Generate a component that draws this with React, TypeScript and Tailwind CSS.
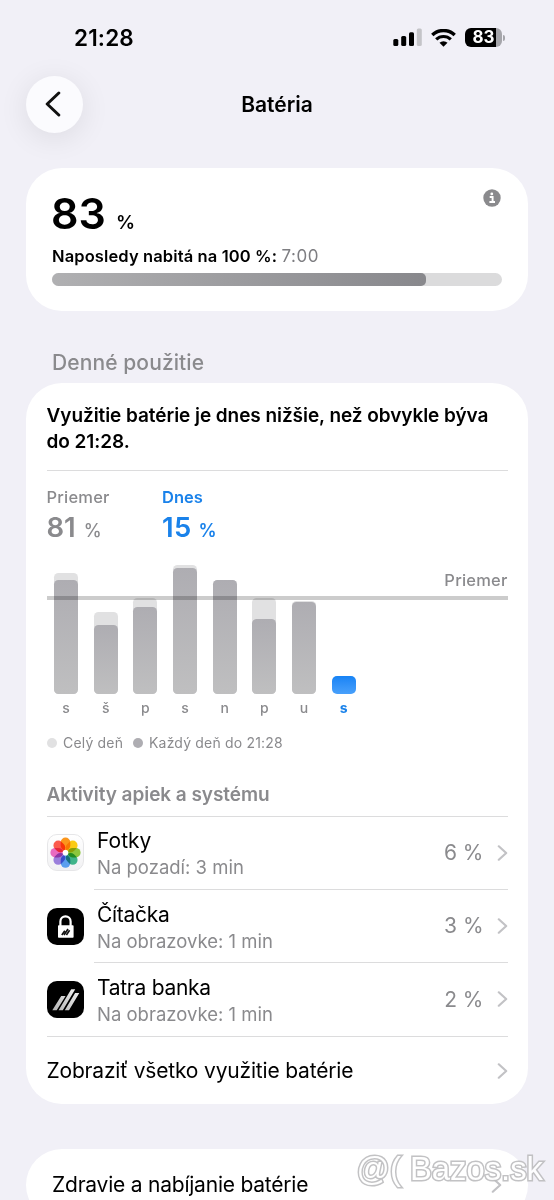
import type { ReactNode } from 'react';
import clsx from 'clsx';

interface DayUsage {
  day: string;
  total: number;
  partial: number;
  today?: boolean;
}

interface AppActivity {
  name: string;
  detail: string;
  percent: string;
  tracking: string;
  icon: ReactNode;
}

// bar heights in px
const days: DayUsage[] = [
  { day: 's', total: 121, partial: 113.5 },
  { day: 'š', total: 82, partial: 69 },
  { day: 'p', total: 96, partial: 87 },
  { day: 's', total: 129, partial: 126 },
  { day: 'n', total: 113.5, partial: 113.5 },
  { day: 'p', total: 96, partial: 75 },
  { day: 'u', total: 93, partial: 91.5 },
  { day: 's', total: 18, partial: 18, today: true },
];

const petals = [
  { angle: 0, color: '#fb961c' },
  { angle: 45, color: '#fbcb12' },
  { angle: 90, color: '#8cc63c' },
  { angle: 135, color: '#3fb489' },
  { angle: 180, color: '#5b9fee' },
  { angle: 225, color: '#9b7fdc' },
  { angle: 270, color: '#e96bc0' },
  { angle: 315, color: '#fb5a4c' },
];

function PhotosIcon() {
  return (
    <svg viewBox="0 0 37 37" className="size-[37px] shrink-0">
      <defs>
        <linearGradient id="photosBg" x1="0" y1="0" x2="0" y2="1">
          <stop offset="0" stopColor="#fff" />
          <stop offset="1" stopColor="#f1f1f3" />
        </linearGradient>
      </defs>
      <rect x="0.5" y="0.5" width="36" height="36" rx="9.5" fill="url(#photosBg)" stroke="#e6e6e8" />
      <g style={{ isolation: 'isolate' }}>
        {petals.map(p => (
          <rect
            key={p.angle}
            x="13.7"
            y="3.6"
            width="9.6"
            height="12.8"
            rx="4.8"
            fill={p.color}
            transform={`rotate(${p.angle} 18.5 18.7)`}
            style={{ mixBlendMode: 'multiply' }}
          />
        ))}
      </g>
      <circle cx="18.5" cy="18.7" r="2.8" fill="#fff" />
    </svg>
  );
}

function ReaderIcon() {
  return (
    <svg viewBox="0 0 37 37" className="size-[37px] shrink-0">
      <rect width="37" height="37" rx="10" fill="#000" />
      <path d="M13.4 19v-5.6a5.1 5.1 0 0 1 10.2 0V19" fill="none" stroke="#fff" strokeWidth="2.2" />
      <rect x="11" y="17.3" width="15.6" height="12.4" rx="0.8" fill="#fff" />
      <path
        d="M14.8 27l3-4.2M17 27l4-6M19.4 27l3.2-4.8"
        stroke="#111"
        strokeWidth="1.6"
        fill="none"
      />
    </svg>
  );
}

function BankIcon() {
  return (
    <svg viewBox="0 0 37 37" className="size-[37px] shrink-0">
      <defs>
        <linearGradient id="bankStripe" x1="0" y1="1" x2="1" y2="0">
          <stop offset="0" stopColor="#b4b4b4" />
          <stop offset="1" stopColor="#f2f2f2" />
        </linearGradient>
      </defs>
      <rect width="37" height="37" rx="10" fill="#000" />
      <path
        d="M5.3 29.3L14.2 15h4.4L9.7 29.3zM11.6 29.3L24.2 8.2h4L15.8 29.3zM17.8 29.3L28.1 12h4.2L22 29.3z"
        fill="url(#bankStripe)"
      />
    </svg>
  );
}

const activities: AppActivity[] = [
  {
    name: 'Fotky',
    detail: 'Na pozadí: 3 min',
    percent: '6 %',
    tracking: 'tracking-normal',
    icon: <PhotosIcon />,
  },
  {
    name: 'Čítačka',
    detail: 'Na obrazovke: 1 min',
    percent: '3 %',
    tracking: 'tracking-[-0.3px]',
    icon: <ReaderIcon />,
  },
  {
    name: 'Tatra banka',
    detail: 'Na obrazovke: 1 min',
    percent: '2 %',
    tracking: 'tracking-[-0.27px]',
    icon: <BankIcon />,
  },
];

function Chevron() {
  return (
    <svg viewBox="0 0 11 16" className="h-4 w-[11px] shrink-0" fill="none">
      <path
        d="M1.8 1.3L9.2 8l-7.4 6.7"
        stroke="#c2c2c5"
        strokeWidth="2.2"
        strokeLinecap="round"
        strokeLinejoin="round"
      />
    </svg>
  );
}

function StatusBar() {
  return (
    <div className="flex h-[75px] items-center justify-between pr-[49px] pl-[74px]">
      <span className="text-[22.5px] font-semibold tracking-[0.15px]">21:28</span>
      <div className="flex items-center">
        <svg viewBox="0 0 29 19" className="h-[19px] w-[29px]">
          <rect x="0.3" y="11" width="5" height="7" rx="1.5" />
          <rect x="8.2" y="8" width="5" height="10" rx="1.5" />
          <rect x="16" y="4.3" width="5" height="13.7" rx="1.5" />
          <rect x="23.8" y="0.5" width="5" height="17.5" rx="1.5" fill="#c4c4c8" />
        </svg>
        <svg viewBox="0 0 25 18" className="ml-[9px] h-[18px] w-[25px]" fill="none">
          <path d="M1.3 6a16.2 16.2 0 0 1 22.4 0" stroke="#000" strokeWidth="3.4" />
          <path d="M5.2 10.4a10.6 10.6 0 0 1 14.6 0" stroke="#000" strokeWidth="3.2" />
          <path d="M12.5 17.8l-4-4a5.7 5.7 0 0 1 8 0z" fill="#000" />
        </svg>
        <div className="ml-[9px] flex h-[19.5px] w-[37px] items-center justify-center overflow-hidden rounded-[6px] bg-[linear-gradient(90deg,#000_83%,#a5a5aa_83%)]">
          <span className="text-[17px] font-bold text-white">83</span>
        </div>
        <div className="ml-[1px] h-[6px] w-[2px] rounded-r-full bg-[#a5a5aa]" />
      </div>
    </div>
  );
}

function NavBar() {
  return (
    <div className="grid h-[60px] grid-cols-[1fr_auto_1fr] items-center px-[26px]">
      <button className="-mt-[2px] flex size-[57px] items-center justify-center rounded-full bg-[#fbfbfe] shadow-[0_5px_30px_rgba(0,0,0,0.09)]">
        <svg viewBox="0 0 16 26" className="mr-1 h-[26px] w-4" fill="none">
          <path
            d="M13.8 2L2.2 13l11.6 11"
            stroke="#111"
            strokeWidth="3"
            strokeLinecap="round"
            strokeLinejoin="round"
          />
        </svg>
      </button>
      <h1 className="text-[21px] font-semibold">Batéria</h1>
    </div>
  );
}

function LevelCard() {
  return (
    <section className="mt-[33px] h-[143px] rounded-[36px] bg-white px-[26px] pt-[20px]">
      <div className="flex items-start justify-between">
        <div className="-mt-px -ml-px flex items-baseline">
          <span className="text-[43px] leading-[52px] font-semibold">83</span>
          <span className="ml-[10px] text-[19px] font-semibold">%</span>
        </div>
        <svg viewBox="0 0 18 18" className="mt-[1px] mr-[1px] size-[18px]">
          <circle cx="9" cy="9" r="8.7" fill="#8a8a8d" />
          <circle cx="8.8" cy="4.9" r="1.4" fill="#fff" />
          <path d="M6.7 8h2.9v5M6.4 13h5.6" stroke="#fff" strokeWidth="1.9" fill="none" />
        </svg>
      </div>
      <div className="mt-[7px] text-[16.5px] leading-5 font-semibold tracking-[0.12px]">
        Naposledy nabitá na 100 %:{' '}
        <span className="text-[17px] font-normal tracking-[0.6px] text-[#7e7e82]">7:00</span>
      </div>
      <div className="mt-[7px] h-[13px] overflow-hidden rounded-full bg-[#dbdbdc]">
        <div className="h-full w-[83%] rounded-r-[5px] bg-linear-to-r from-[#b0b0b2] to-[#88888c]" />
      </div>
    </section>
  );
}

function UsageChart() {
  return (
    <div className="relative mt-[17.5px] h-[130px]">
      <div className="flex h-full items-end gap-[15.65px] pl-[7.6px]">
        {days.map((d, i) => (
          <div key={i} className="relative w-6 shrink-0">
            <div
              className={clsx('rounded-[4.5px]', !d.today && 'bg-[#e1e1e2]')}
              style={{ height: d.total }}
            />
            <div
              className={clsx(
                'absolute inset-x-0 bottom-0',
                d.today
                  ? 'rounded-[5px] bg-linear-to-b from-[#1583f5] to-[#48a0fb]'
                  : 'rounded-[4.5px] bg-linear-to-b from-[#aeadb2] to-[#bfbfc0]',
              )}
              style={{ height: d.partial }}
            />
          </div>
        ))}
      </div>
      <div className="absolute inset-x-0 top-[32px] h-[4px] bg-black/20" />
      <span className="absolute top-[6.5px] right-0 text-[16.5px] leading-5 font-medium tracking-[0.2px] text-[#8a8a8d]">
        Priemer
      </span>
    </div>
  );
}

function UsageCard() {
  return (
    <section className="h-[721px] rounded-[36px] bg-white px-[20.5px] pt-[20px]">
      <p className="text-[19px] leading-[25.5px] font-semibold tracking-[-0.06px] whitespace-nowrap">
        Využitie batérie je dnes nižšie, než obvykle býva
        <br />
        do 21:28.
      </p>
      <div className="mt-[16px] h-px bg-[#dcdcdd]" />

      <div className="mt-[16px] flex">
        <div className="w-[115.5px] font-semibold text-[#8a8a8d]">
          <div className="text-[16.5px] leading-5 font-medium tracking-[0.2px]">Priemer</div>
          <div className="mt-[5px] flex items-baseline leading-[30px]">
            <span className="text-[27.5px]">81</span>
            <span className="ml-[8px] text-[18px] font-medium">%</span>
          </div>
        </div>
        <div className="font-semibold text-[#1a82ea]">
          <div className="text-[16.5px] leading-5">Dnes</div>
          <div className="mt-[5px] flex items-baseline leading-[30px]">
            <span className="text-[27.5px] tracking-[0.3px]">15</span>
            <span className="ml-[7px] text-[18px]">%</span>
          </div>
        </div>
      </div>

      <UsageChart />

      <div className="mt-[6px] flex gap-[15.65px] pl-[7.6px]">
        {days.map((d, i) => (
          <span
            key={i}
            className={clsx(
              'w-6 text-center text-[14px] leading-4',
              d.today ? 'font-bold text-[#1a82ea]' : 'font-medium text-[#8a8a8d]',
            )}
          >
            {d.day}
          </span>
        ))}
      </div>

      <div className="mt-[17px] flex h-5 items-center text-[14px] tracking-[0.18px] text-[#8a8a8d]">
        <span className="size-[10px] rounded-full bg-[#e1e1e2]" />
        <span className="ml-[6.5px] w-[69.5px]">Celý deň</span>
        <span className="size-[10px] rounded-full bg-[#aeadb2]" />
        <span className="ml-[6.5px]">Každý deň do 21:28</span>
      </div>

      <h3 className="mt-[30px] text-[19px] leading-6 font-semibold tracking-[-0.05px] text-[#8a8a8d]">
        Aktivity apiek a systému
      </h3>
      <div className="mt-[9px] h-px bg-[#dcdcdd]" />

      {activities.map((a, i) => (
        <div key={a.name} className="flex h-[73.4px]">
          <div className="flex w-[47.5px] items-center pb-[1px]">{a.icon}</div>
          <div
            className={clsx(
              'flex flex-1 items-center border-b border-[#dcdcdd] pl-[3px]',
              i === activities.length - 1 && '-ml-[47.5px] pl-[50.5px]',
            )}
          >
            <div className="flex-1 pt-[3px]">
              <div className={clsx('text-[21px] leading-[27px]', a.tracking)}>{a.name}</div>
              <div className="text-[18.5px] leading-[27px] text-[#8a8a8d]">{a.detail}</div>
            </div>
            <span className="mr-[13px] text-[21px] text-[#8a8a8d]">{a.percent}</span>
            <Chevron />
          </div>
        </div>
      ))}

      <div className="flex h-[69px] items-center justify-between">
        <span className="text-[21px] tracking-[-0.18px]">Zobraziť všetko využitie batérie</span>
        <Chevron />
      </div>
    </section>
  );
}

function Watermark() {
  return (
    <div className="absolute right-[11px] bottom-[13px] font-['Liberation_Sans',Arial,sans-serif] text-[32.8px] leading-9 whitespace-pre text-white opacity-90 [-webkit-text-stroke:3px_#bcbcbe] [paint-order:stroke_fill]">
      @( Bazos.sk
    </div>
  );
}

export default function App() {
  return (
    <div className="relative h-[1200px] w-[554px] overflow-hidden bg-[#f1f0f7] font-[Inter,'Noto_Sans',sans-serif] text-black">
      <StatusBar />
      <NavBar />
      <main className="px-[26px]">
        <LevelCard />
        <h2 className="mt-[40px] mb-[8px] ml-[26px] text-[21px] leading-6 font-medium tracking-[0.1px] text-[#8a8a8d]">
          Denné použitie
        </h2>
        <UsageCard />
        <section className="mt-[45px] h-[72px] rounded-[36px] bg-white px-[26px]">
          <div className="flex h-[71px] items-center justify-between">
            <span className="text-[21px] tracking-[-0.22px]">Zdravie a nabíjanie batérie</span>
            <Chevron />
          </div>
        </section>
      </main>
      <Watermark />
    </div>
  );
}
